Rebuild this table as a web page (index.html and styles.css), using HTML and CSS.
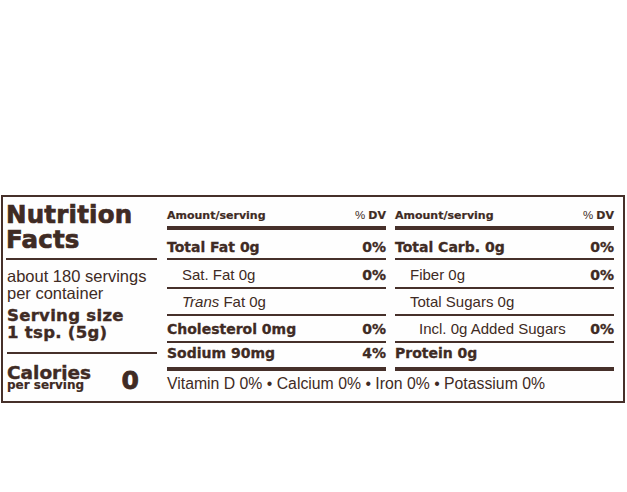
FILE: index.html
```html
<!DOCTYPE html>
<html lang="en">
<head>
<meta charset="utf-8">
<title>Nutrition Facts</title>
<link rel="stylesheet" href="styles.css">
</head>
<body>
<div class="label">
  <div class="left">
    <div class="title">Nutrition<br>Facts</div>
    <div class="servings">about 180 servings<br>per container</div>
    <div class="size">Serving size<br>1 tsp. (5g)</div>
    <div class="cal">
      <div class="cal-text">
        <div class="cal-word">Calories</div>
        <div class="cal-per">per serving</div>
      </div>
      <div class="cal-num">0</div>
    </div>
  </div>
  <div class="main">
    <div class="cols">
      <div class="col">
        <div class="row head"><span class="hb">Amount/serving</span><span class="dv">% <span class="hb">DV</span></span></div>
        <div class="row r1"><span class="b">Total Fat 0g</span><span class="b">0%</span></div>
        <div class="row r2"><span class="in">Sat. Fat 0g</span><span class="b">0%</span></div>
        <div class="row r3"><span class="in"><i>Trans</i> Fat 0g</span></div>
        <div class="row r4"><span class="b">Cholesterol 0mg</span><span class="b">0%</span></div>
        <div class="row r5"><span class="b">Sodium 90mg</span><span class="b">4%</span></div>
      </div>
      <div class="col">
        <div class="row head"><span class="hb">Amount/serving</span><span class="dv">% <span class="hb">DV</span></span></div>
        <div class="row r1"><span class="b">Total Carb. 0g</span><span class="b">0%</span></div>
        <div class="row r2"><span class="in">Fiber 0g</span><span class="b">0%</span></div>
        <div class="row r3"><span class="in">Total Sugars 0g</span></div>
        <div class="row r4"><span class="in2">Incl. 0g Added Sugars</span><span class="b">0%</span></div>
        <div class="row r5"><span class="b">Protein 0g</span></div>
      </div>
    </div>
    <div class="vit">Vitamin D 0% • Calcium 0% • Iron 0% • Potassium 0%</div>
  </div>
</div>
</body>
</html>
```

FILE: styles.css
```css
* { box-sizing: border-box; }
html, body { margin: 0; padding: 0; background: #ffffff; }
body { color: #3f2b24; font-family: "Liberation Sans", Arial, sans-serif; }

.label {
  margin: 195px 0 0 1px;
  width: 624px;
  height: 208px;
  border: 2px solid #46302a;
  background: #fefefe;
  display: flex;
  padding: 0 9px 0 4px;
}

.left { width: 150px; flex: none; }
.title {
  font-family: "DejaVu Sans", sans-serif;
  font-weight: bold;
  font-size: 24.5px;
  line-height: 25px;
  letter-spacing: 0.2px;
  -webkit-text-stroke: 0.7px currentColor;
  padding: 5px 0 6px;
  margin-left: -1px;
  border-bottom: 2px solid #46302a;
}
.servings {
  font-size: 16.5px;
  line-height: 17px;
  margin-top: 8px;
}
.size {
  font-family: "DejaVu Sans", sans-serif;
  font-weight: bold;
  font-size: 16.5px;
  line-height: 17px;
  letter-spacing: 0.3px;
  -webkit-text-stroke: 0.4px currentColor;
  padding: 4.5px 0 11.5px;
  border-bottom: 2px solid #46302a;
}
.cal {
  display: flex;
  align-items: flex-end;
  font-family: "DejaVu Sans", sans-serif;
  font-weight: bold;
  -webkit-text-stroke: 0.4px currentColor;
  padding-top: 10.4px;
}
.cal-word { font-size: 18.5px; line-height: 17px; }
.cal-per { font-size: 12px; line-height: 8px; -webkit-text-stroke: 0.2px currentColor; }
.cal-num {
  font-size: 25px;
  line-height: 16px;
  margin-left: auto;
  margin-right: 18px;
  -webkit-text-stroke: 0.8px currentColor;
}

.main { margin-left: 10px; width: 447px; flex: none; }
.cols { display: flex; gap: 9px; }
.col { width: 219px; flex: none; }

.row {
  display: flex;
  justify-content: space-between;
  align-items: baseline;
  font-size: 15px;
  line-height: 16px;
  border-bottom: 2px solid #46302a;
  white-space: nowrap;
}
.row .b, .row .hb {
  font-family: "DejaVu Sans", sans-serif;
  font-weight: bold;
  -webkit-text-stroke: 0.3px currentColor;
}
.row .b { font-size: 14px; }
.head { height: 33px; padding-top: 10px; border-bottom-width: 4px; }
.head .hb { font-size: 11px; -webkit-text-stroke: 0.2px currentColor; }
.head .dv { font-size: 11.5px; }
.r1 { height: 30px; padding-top: 9px; }
.r2 { height: 29px; padding-top: 7px; }
.r3 { height: 27px; padding-top: 5px; }
.r4 { height: 27px; padding-top: 5px; }
.r5 { height: 28px; padding-top: 2px; border-bottom-width: 4px; }
.in { padding-left: 15px; }
.in2 { padding-left: 24px; }

.vit {
  height: 30px;
  padding-top: 5px;
  font-size: 15.8px;
  line-height: 16px;
  white-space: nowrap;
}
```
